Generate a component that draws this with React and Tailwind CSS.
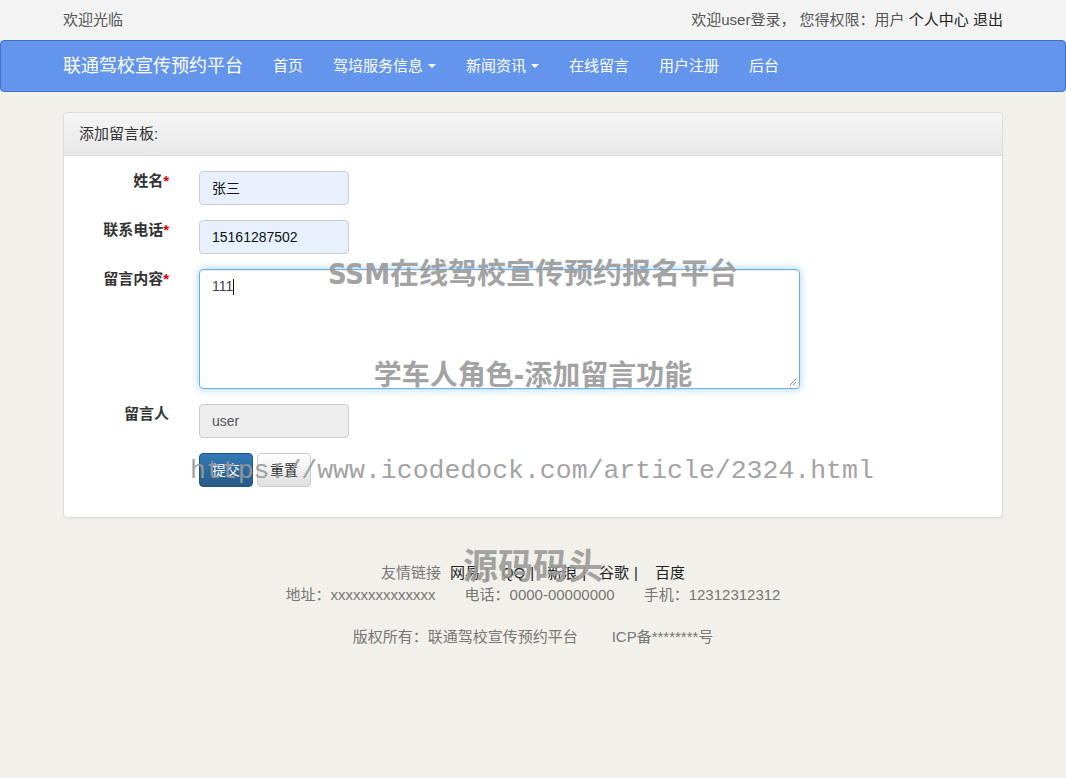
import React from 'react';

const FONT = { fontFamily: '"Liberation Sans", "Noto Sans CJK SC", sans-serif' };

const NAV = [
  { label: '首页' },
  { label: '驾培服务信息', caret: true },
  { label: '新闻资讯', caret: true },
  { label: '在线留言' },
  { label: '用户注册' },
  { label: '后台' },
];

const LINKS = ['网易', 'QQ', '新浪', '谷歌'];

function Caret() {
  return <span className="ml-[5px] inline-block w-0 h-0 border-x-[4px] border-x-transparent border-t-[4px] border-t-white align-middle" />;
}

function Field({ label, required, children }) {
  return (
    <div className="flex mb-[15px]">
      <div className="w-[90px] text-right font-bold text-[15px] leading-[20px] text-[#333]">
        {label}
        {required && <span className="text-[#d00]">*</span>}
      </div>
      <div className="ml-[30px]">{children}</div>
    </div>
  );
}

export default function App() {
  return (
    <div className="min-h-screen bg-[#f1f0ea] text-[15px] text-[#333] relative" style={FONT}>
      {/* 顶部 */}
      <div className="h-[40px] bg-[#f3f3f3]">
        <div className="w-[940px] mx-auto h-full flex items-center justify-between text-[#555]">
          <span>欢迎光临</span>
          <span>
            欢迎user登录， 您得权限：用户 <span className="text-[#222]">个人中心</span> <span className="text-[#222]">退出</span>
          </span>
        </div>
      </div>

      {/* 导航 */}
      <nav className="h-[52px] bg-[#6495ed] border border-[#4372c4] rounded-[4px]">
        <div className="w-[940px] mx-auto h-full flex items-center text-white">
          <span className="text-[18px] pr-[15px]">联通驾校宣传预约平台</span>
          {NAV.map((n) => (
            <span key={n.label} className="px-[15px] flex items-center">
              {n.label}
              {n.caret && <Caret />}
            </span>
          ))}
        </div>
      </nav>

      {/* 表单 */}
      <div className="w-[940px] mx-auto mt-[20px]">
        <div className="bg-white border border-[#ddd] rounded-[4px] shadow-[0_1px_2px_rgba(0,0,0,0.05)]">
          <div className="h-[43px] px-[15px] flex items-center bg-gradient-to-b from-[#f5f5f5] to-[#e8e8e8] border-b border-[#ddd] rounded-t-[4px] text-[#333]">
            添加留言板:
          </div>
          <div className="p-[15px] text-[14px]">
            <Field label="姓名" required>
              <div className="w-[150px] h-[34px] px-[12px] flex items-center bg-[#e8f0fe] border border-[#ccc] rounded-[4px] text-[#111]">张三</div>
            </Field>
            <Field label="联系电话" required>
              <div className="w-[150px] h-[34px] px-[12px] flex items-center bg-[#e8f0fe] border border-[#ccc] rounded-[4px] text-[#111]">15161287502</div>
            </Field>
            <Field label="留言内容" required>
              <div className="relative w-[601px] h-[120px] px-[12px] py-[6px] border border-[#66afe9] rounded-[4px] shadow-[inset_0_1px_1px_rgba(0,0,0,0.075),0_0_8px_rgba(102,175,233,0.6)] text-[#444]">
                111<span className="inline-block w-px h-[16px] bg-[#111] align-middle" />
                <svg className="absolute right-[2px] bottom-[2px]" width="8" height="8" viewBox="0 0 8 8">
                  <path d="M1 7 L7 1 M4 7 L7 4" stroke="#888" strokeWidth="1" />
                </svg>
              </div>
            </Field>
            <Field label="留言人">
              <div className="w-[150px] h-[34px] px-[12px] flex items-center bg-[#eee] border border-[#ccc] rounded-[4px] text-[#555]">user</div>
            </Field>
            <Field label="">
              <div className="flex gap-[4px]">
                <button className="h-[34px] px-[12px] rounded-[4px] border border-[#245580] bg-gradient-to-b from-[#337ab7] to-[#265a88] text-white">提交</button>
                <button className="h-[34px] px-[12px] rounded-[4px] border border-[#ccc] bg-gradient-to-b from-white to-[#e0e0e0] text-[#333]">重置</button>
              </div>
            </Field>
          </div>
        </div>
      </div>

      {/* 页脚 */}
      <footer className="mt-[44px] text-center leading-[22px] text-[#777]">
        <div className="flex justify-center">
          <span className="mr-[9px]">友情链接</span>
          {LINKS.map((l) => (
            <span key={l} className="text-[#222]">
              {l}
              <span className="ml-[5px] mr-[13px]">|</span>
            </span>
          ))}
          <span className="ml-[4px] text-[#222]">百度</span>
        </div>
        <div className="flex justify-center gap-[29px]">
          <span>地址：xxxxxxxxxxxxxx</span>
          <span>电话：0000-00000000</span>
          <span>手机：12312312312</span>
        </div>
        <div className="mt-[20px] flex justify-center gap-[34px]">
          <span>版权所有：联通驾校宣传预约平台</span>
          <span>ICP备********号</span>
        </div>
      </footer>

      {/* 水印 */}
      <div className="absolute left-0 right-0 top-[253px] text-center font-bold text-[29px] text-[#9a9a9a] opacity-90 pointer-events-none" style={{ fontFamily: '"DejaVu Sans Condensed", "Noto Sans CJK SC", sans-serif' }}>
        SSM在线驾校宣传预约报名平台
      </div>
      <div className="absolute left-0 right-0 top-[355px] text-center font-bold text-[28px] text-[#9a9a9a] opacity-90 pointer-events-none" style={{ fontFamily: '"DejaVu Sans Condensed", "Noto Sans CJK SC", sans-serif' }}>
        学车人角色-添加留言功能
      </div>
      <div className="absolute left-[190px] top-[452px] text-[26.5px] text-[#9a9a9a] opacity-90 pointer-events-none" style={{ fontFamily: '"Liberation Mono", monospace' }}>
        https://www.icodedock.com/article/2324.html
      </div>
      <div className="absolute left-0 right-0 top-[538px] text-center font-bold text-[35px] text-[#9a9a9a] opacity-90 pointer-events-none" style={{ fontFamily: '"Noto Sans CJK SC", sans-serif' }}>
        源码码头
      </div>
    </div>
  );
}
